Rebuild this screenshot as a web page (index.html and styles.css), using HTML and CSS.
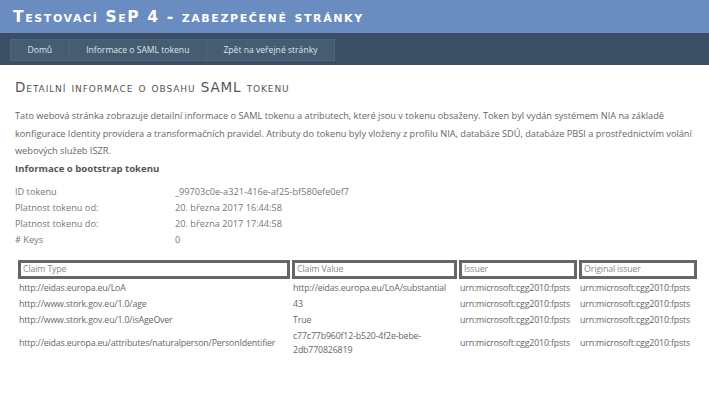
FILE: index.html
```html
<!DOCTYPE html>
<html lang="cs">
<head>
    <meta charset="UTF-8">
    <title>Testovací SeP 4 - zabezpečené stránky</title>
    <link rel="stylesheet" href="styles.css">
</head>
<body>

    <div class="header">
        <h1>Testovací SeP 4 - zabezpečené stránky</h1>
    </div>

    <div class="menu-bar">
        <ul class="menu">
            <li><a href="#">Domů</a></li>
            <li><a href="#">Informace o SAML tokenu</a></li>
            <li><a href="#">Zpět na veřejné stránky</a></li>
        </ul>
    </div>

    <div class="main">
        <h2>Detailní informace o obsahu SAML tokenu</h2>

        <p>Tato webová stránka zobrazuje detailní informace o SAML tokenu a atributech, které jsou v tokenu obsaženy. Token byl vydán systémem NIA na základě konfigurace Identity providera a transformačních pravidel. Atributy do tokenu byly vloženy z profilu NIA, databáze SDÚ, databáze PBSI a prostřednictvím volání webových služeb ISZR.</p>

        <h3>Informace o bootstrap tokenu</h3>

        <table class="token-info">
            <tr><td class="label">ID tokenu</td><td>_99703c0e-a321-416e-af25-bf580efe0ef7</td></tr>
            <tr><td class="label">Platnost tokenu od:</td><td>20. března 2017 16:44:58</td></tr>
            <tr><td class="label">Platnost tokenu do:</td><td>20. března 2017 17:44:58</td></tr>
            <tr><td class="label"># Keys</td><td>0</td></tr>
        </table>

        <table class="claims">
            <colgroup>
                <col class="col-type">
                <col class="col-value">
                <col class="col-issuer">
                <col class="col-issuer">
            </colgroup>
            <tr>
                <th>Claim Type</th>
                <th>Claim Value</th>
                <th>Issuer</th>
                <th>Original issuer</th>
            </tr>
            <tr>
                <td>http://eidas.europa.eu/LoA</td>
                <td>http://eidas.europa.eu/LoA/substantial</td>
                <td>urn:microsoft:cgg2010:fpsts</td>
                <td>urn:microsoft:cgg2010:fpsts</td>
            </tr>
            <tr>
                <td>http://www.stork.gov.eu/1.0/age</td>
                <td>43</td>
                <td>urn:microsoft:cgg2010:fpsts</td>
                <td>urn:microsoft:cgg2010:fpsts</td>
            </tr>
            <tr>
                <td>http://www.stork.gov.eu/1.0/isAgeOver</td>
                <td>True</td>
                <td>urn:microsoft:cgg2010:fpsts</td>
                <td>urn:microsoft:cgg2010:fpsts</td>
            </tr>
            <tr>
                <td>http://eidas.europa.eu/attributes/naturalperson/PersonIdentifier</td>
                <td class="wrap">c77c77b960f12-b520-4f2e-bebe-2db770826819</td>
                <td>urn:microsoft:cgg2010:fpsts</td>
                <td>urn:microsoft:cgg2010:fpsts</td>
            </tr>
        </table>
    </div>

</body>
</html>
```

FILE: styles.css
```css
body {
    margin: 0;
    padding: 0;
    background-color: #fff;
    font-family: "Open Sans", "Liberation Sans", sans-serif;
    font-size: 9.2px;
    color: #666;
}

.header {
    background-color: #6a8cc0;
    height: 33px;
    padding: 0 13px;
}

.header h1 {
    margin: 0;
    color: #fff;
    font-family: "DejaVu Sans", sans-serif;
    font-size: 15.5px;
    font-weight: bold;
    font-variant: small-caps;
    letter-spacing: 1.6px;
    line-height: 34px;
}

.menu-bar {
    background-color: #3a4f63;
    height: 32px;
    padding: 6px 10px 0;
    box-sizing: border-box;
}

.menu {
    list-style: none;
    margin: 0;
    padding: 0;
    display: flex;
}

.menu li a {
    display: block;
    background-color: #465c71;
    border: 1px solid #4e667d;
    color: #dde4ec;
    font-size: 8.6px;
    line-height: 20px;
    padding: 0 16.5px;
    margin-right: -1px;
    text-decoration: none;
}

.main {
    padding: 8px 10px 8px 15px;
}

h2 {
    margin: 6px 0 12px;
    font-family: "DejaVu Sans", sans-serif;
    font-size: 13.5px;
    font-weight: normal;
    font-variant: small-caps;
    letter-spacing: 0.9px;
    color: #555;
}

p {
    margin: 0;
    line-height: 17.5px;
}

h3 {
    margin: 2px 0 9px;
    font-size: 9.6px;
    font-weight: bold;
    color: #555;
}

.token-info {
    border-collapse: collapse;
    margin-bottom: 10px;
}

.token-info td {
    padding: 0;
    height: 16px;
    color: #777;
}

.token-info td.label {
    width: 160px;
}

.claims {
    border-collapse: separate;
    border-spacing: 2px;
    margin-left: 1px;
    width: 683px;
    table-layout: fixed;
    font-size: 8.8px;
    letter-spacing: -0.15px;
}

.col-type {
    width: 272px;
}

.col-value {
    width: 165px;
}

.col-issuer {
    width: 118px;
}

.claims th {
    border: 3px solid #666;
    padding: 0 2px;
    text-align: left;
    font-weight: normal;
    color: #888;
    line-height: 13px;
}

.claims td {
    padding: 0 1px;
    line-height: 14px;
    height: 14px;
    color: #666;
    white-space: nowrap;
    overflow: hidden;
}

.claims td.wrap {
    white-space: normal;
}
```
